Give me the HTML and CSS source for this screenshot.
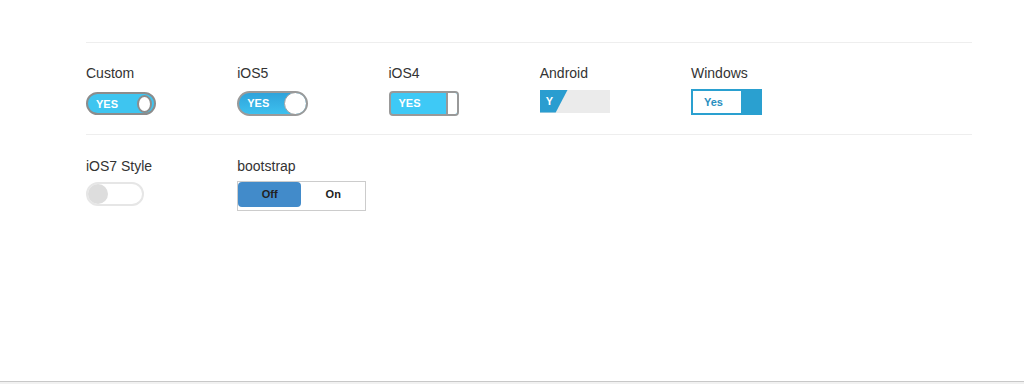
FILE: index.html
```html
<!DOCTYPE html>
<html lang="en">
<head>
    <meta charset="UTF-8">
    <title>Switches</title>
    <link rel="stylesheet" href="styles.css">
</head>
<body>
    <div class="page">
        <div class="container">
            <div class="row">
                <div class="cell">
                    <div class="label">Custom</div>
                    <div class="holder">
                        <div class="sw-custom"><span>YES</span><i class="knob"></i></div>
                    </div>
                </div>
                <div class="cell">
                    <div class="label">iOS5</div>
                    <div class="holder">
                        <div class="sw-ios5"><span>YES</span><i class="knob"></i></div>
                    </div>
                </div>
                <div class="cell">
                    <div class="label">iOS4</div>
                    <div class="holder">
                        <div class="sw-ios4"><span>YES</span><i class="knob"></i></div>
                    </div>
                </div>
                <div class="cell">
                    <div class="label">Android</div>
                    <div class="holder">
                        <div class="sw-android"><span class="on">Y</span></div>
                    </div>
                </div>
                <div class="cell">
                    <div class="label">Windows</div>
                    <div class="holder">
                        <div class="sw-windows"><span>Yes</span><i class="knob"></i></div>
                    </div>
                </div>
            </div>
            <div class="row second">
                <div class="cell">
                    <div class="label">iOS7 Style</div>
                    <div class="holder">
                        <div class="sw-ios7"><i class="knob"></i></div>
                    </div>
                </div>
                <div class="cell">
                    <div class="label">bootstrap</div>
                    <div class="holder">
                        <div class="sw-bootstrap">
                            <span class="active">Off</span>
                            <span>On</span>
                        </div>
                    </div>
                </div>
            </div>
        </div>
    </div>
    <div class="footer"></div>
</body>
</html>
```

FILE: styles.css
```css
html, body {
    margin: 0;
    height: 100%;
}
body {
    font-family: "Liberation Sans", Arial, sans-serif;
    color: #333;
    background: #fff;
    display: flex;
    flex-direction: column;
}
.page {
    flex: 1;
    padding-top: 42px;
}
.container {
    margin-left: 86px;
    width: 886px;
}
.row {
    display: grid;
    grid-template-columns: repeat(5, 151.25px);
    border-top: 1px solid #eeeeee;
    padding: 20px 0 19px;
}
.row.second {
    padding-top: 21px;
}
.label {
    font-size: 14px;
    line-height: 20px;
}
.holder {
    height: 26px;
    margin-top: 6px;
    display: flex;
    align-items: center;
}
.second .holder {
    height: 30px;
    margin-top: 5px;
}
.knob {
    display: block;
    box-sizing: border-box;
}

/* custom */
.sw-custom {
    box-sizing: border-box;
    width: 70px;
    height: 23px;
    border: 2px solid #8c8c8c;
    border-radius: 12px;
    background: #3ec5f0;
    display: flex;
    align-items: center;
    justify-content: space-between;
    padding: 0 2px 0 8px;
    margin-top: 3px;
}
.sw-custom span, .sw-ios5 span, .sw-ios4 span {
    color: #fff;
    font-size: 11px;
    font-weight: bold;
}
.sw-custom .knob {
    width: 15px;
    height: 18px;
    border: 2px solid #8c8c8c;
    border-radius: 50%;
    background: #fff;
}

/* ios5 */
.sw-ios5 {
    box-sizing: border-box;
    width: 71px;
    height: 25px;
    border: 2px solid #9a9a9a;
    border-radius: 13px;
    background: linear-gradient(#2fa3db, #3dc0ee);
    display: flex;
    align-items: center;
    justify-content: space-between;
    padding-left: 8px;
    margin-top: 2px;
    overflow: hidden;
}
.sw-ios5 .knob {
    width: 23px;
    height: 23px;
    margin-right: -1px;
    border: 1px solid #a0a0a0;
    border-radius: 50%;
    background: #fff;
}

/* ios4 */
.sw-ios4 {
    box-sizing: border-box;
    width: 70px;
    height: 25px;
    border: 2px solid #999;
    border-radius: 4px;
    background: #3ec9f6;
    display: flex;
    align-items: center;
    justify-content: space-between;
    padding-left: 8px;
    margin-top: 2px;
    overflow: hidden;
}
.sw-ios4 .knob {
    width: 11px;
    height: 100%;
    border-left: 2px solid #999;
    background: #fff;
}

/* android */
.sw-android {
    width: 70px;
    height: 23px;
    background: #ebebeb;
    margin-top: -2px;
}
.sw-android .on {
    display: block;
    width: 28px;
    height: 23px;
    background: #2a9dd0;
    clip-path: polygon(0 0, 100% 0, 57% 100%, 0 100%);
    color: #fff;
    font-size: 11px;
    font-weight: bold;
    line-height: 22px;
    padding-left: 6px;
    box-sizing: border-box;
}

/* windows */
.sw-windows {
    box-sizing: border-box;
    width: 71px;
    height: 26px;
    border: 2px solid #2aa0d0;
    background: #fff;
    display: flex;
    align-items: stretch;
    justify-content: space-between;
}
.sw-windows span {
    color: #2a8fbf;
    font-size: 11px;
    font-weight: bold;
    line-height: 22px;
    padding-left: 11px;
}
.sw-windows .knob {
    width: 19px;
    background: #2aa0d0;
}

/* ios7 */
.sw-ios7 {
    box-sizing: border-box;
    width: 58px;
    height: 24px;
    border: 2px solid #e6e6e6;
    border-radius: 12px;
    background: #fff;
    display: flex;
    align-items: center;
    margin-top: -5px;
}
.sw-ios7 .knob {
    width: 20px;
    height: 20px;
    border-radius: 50%;
    background: #dddddd;
}

/* bootstrap */
.sw-bootstrap {
    box-sizing: border-box;
    width: 129px;
    height: 30px;
    border: 1px solid #cccccc;
    display: flex;
    padding: 0 0 3px 0;
    align-items: stretch;
}
.sw-bootstrap span {
    flex: 1;
    text-align: center;
    font-size: 11px;
    font-weight: bold;
    color: #222;
    line-height: 25px;
}
.sw-bootstrap .active {
    flex: 0 0 63px;
    background: #428bca;
    border-radius: 4px;
}

.footer {
    height: 2px;
    border-top: 1px solid #c8c8c8;
    background: #f1f1f1;
}
```
